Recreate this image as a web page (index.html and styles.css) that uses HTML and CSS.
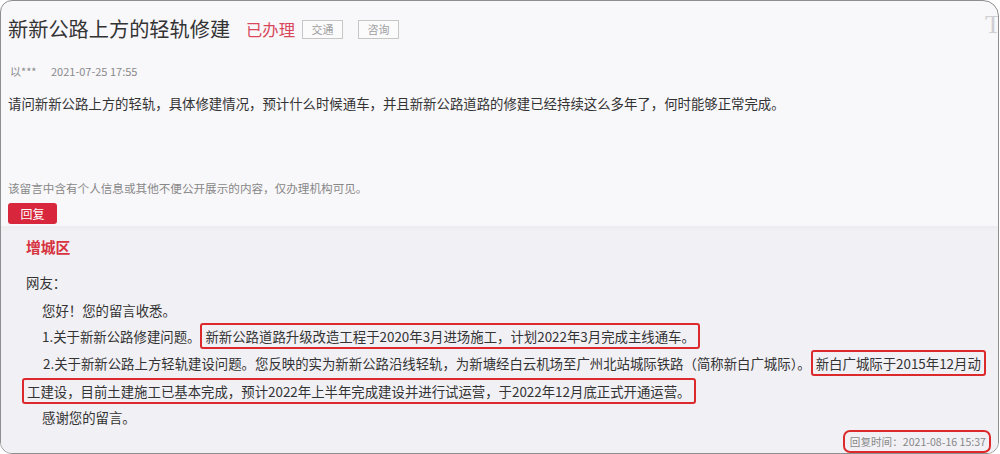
FILE: index.html
```html
<!DOCTYPE html>
<html lang="zh-CN">
<head>
<meta charset="utf-8">
<title>新新公路上方的轻轨修建</title>
<link rel="stylesheet" href="styles.css">
</head>
<body>
<div class="frame">
  <span class="watermark">T</span>
  <section class="question">
    <div class="title-row">
      <h1 class="title">新新公路上方的轻轨修建</h1>
      <span class="status">已办理</span>
      <span class="tag">交通</span>
      <span class="tag tag-second">咨询</span>
    </div>
    <div class="meta">
      <span class="author">以***</span>
      <span class="date">2021-07-25 17:55</span>
    </div>
    <p class="question-text">请问新新公路上方的轻轨，具体修建情况，预计什么时候通车，并且新新公路道路的修建已经持续这么多年了，何时能够正常完成。</p>
    <p class="notice">该留言中含有个人信息或其他不便公开展示的内容，仅办理机构可见。</p>
    <span class="reply-btn">回复</span>
  </section>
  <section class="answer">
    <h2 class="org">增城区</h2>
    <p class="salutation">网友：</p>
    <p class="para">您好！您的留言收悉。</p>
    <p class="para">1.关于新新公路修建问题。<span class="mark">新新公路道路升级改造工程于2020年3月进场施工，计划2022年3月完成主线通车。</span></p>
    <p class="para para-wide">2.关于新新公路上方轻轨建设问题。您反映的实为新新公路沿线轻轨，为新塘经白云机场至广州北站城际铁路（简称新白广城际）。<span class="mark">新白广城际于2015年12月动<br>工建设，目前土建施工已基本完成，预计2022年上半年完成建设并进行试运营，于2022年12月底正式开通运营。</span></p>
    <p class="para para-last">感谢您的留言。</p>
    <div class="reply-time-row">
      <span class="reply-time">回复时间：2021-08-16 15:37</span>
    </div>
  </section>
</div>
</body>
</html>
```

FILE: styles.css
```css
* {
  box-sizing: border-box;
}

html, body {
  margin: 0;
  padding: 0;
  background: #ffffff;
}

body {
  font-family: "Noto Sans CJK SC", "Noto Sans", sans-serif;
  color: #333333;
}

.frame {
  position: relative;
  width: 999px;
  height: 454px;
  border: 1px solid #8e8e8e;
  border-radius: 12px 16px 12px 12px;
  background: #f8f7fa;
  overflow: hidden;
  display: flex;
  flex-direction: column;
}

.watermark {
  position: absolute;
  top: 10px;
  right: -3px;
  font-family: "Liberation Serif", "DejaVu Serif", serif;
  font-size: 26px;
  line-height: 28px;
  color: #cfcfd2;
}

.question {
  padding: 13px 0 0 7px;
  display: flex;
  flex-direction: column;
  align-items: flex-start;
}

.title-row {
  display: flex;
  align-items: center;
  height: 30px;
}

.title {
  margin: 0;
  font-size: 20.2px;
  font-weight: normal;
  line-height: 30px;
  color: #333333;
}

.status {
  margin-left: 16px;
  font-size: 16.3px;
  line-height: 30px;
  color: #d8475c;
}

.tag {
  margin-left: 7px;
  width: 41px;
  height: 19px;
  border: 1px solid #c6c6c6;
  background: #fbfbfc;
  font-size: 11px;
  line-height: 17px;
  text-align: center;
  color: #a0a0a0;
}

.tag-second {
  margin-left: 15px;
}

.meta {
  margin-top: 19px;
  height: 16px;
  display: flex;
  font-size: 11px;
  line-height: 16px;
  color: #8a8a8a;
}

.author {
  margin-left: 2px;
  width: 41px;
}

.question-text {
  margin: 14px 0 0 0;
  font-size: 13.4px;
  line-height: 20px;
  color: #333333;
}

.notice {
  margin: 67px 0 0 0;
  font-size: 11.6px;
  line-height: 16px;
  color: #888888;
}

.reply-btn {
  margin-top: 7px;
  width: 49px;
  height: 21px;
  border-radius: 3px;
  background: #d8273c;
  color: #ffffff;
  font-size: 12px;
  line-height: 21px;
  text-align: center;
}

.answer {
  margin-top: 2px;
  flex: 1;
  background: linear-gradient(#edecf1 0, #f1f0f5 6px, #f1f0f5 100%);
  padding: 11px 2px 0 25px;
}

.org {
  margin: 0;
  font-size: 14.8px;
  font-weight: bold;
  line-height: 20px;
  color: #d7333f;
}

.salutation {
  margin: 12px 0 0 0;
  font-size: 13.4px;
  line-height: 26px;
}

.para {
  margin: 0;
  font-size: 13.4px;
  line-height: 26px;
  text-indent: 16px;
  white-space: nowrap;
}

.salutation + .para {
  margin-top: 2px;
}

.para-wide {
  margin-left: -4px;
  text-indent: 21px;
  line-height: 28px;
}

.para-last {
  line-height: 25px;
}

.mark {
  border: 2px solid #dc2a2c;
  border-radius: 3px;
  padding: 1px 3px;
  -webkit-box-decoration-break: clone;
  box-decoration-break: clone;
}

.reply-time-row {
  display: flex;
  justify-content: flex-end;
  padding-right: 5px;
  margin-top: 0;
}

.reply-time {
  border: 2px solid #dc2a2c;
  border-radius: 7px;
  padding: 2px 3px 2px 5px;
  font-size: 10.6px;
  line-height: 15px;
  color: #888888;
}
```
